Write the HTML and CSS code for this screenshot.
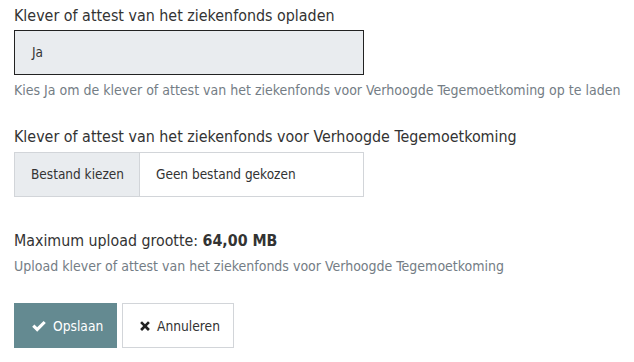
FILE: index.html
```html
<!DOCTYPE html>
<html>
<head>
<meta charset="utf-8">
<link rel="stylesheet" href="styles.css">
</head>
<body>
<form class="form">
  <div class="group">
    <label class="label">Klever of attest van het ziekenfonds opladen</label>
    <div class="select">Ja</div>
    <div class="help">Kies Ja om de klever of attest van het ziekenfonds voor Verhoogde Tegemoetkoming op te laden</div>
  </div>
  <div class="group group-file">
    <label class="label">Klever of attest van het ziekenfonds voor Verhoogde Tegemoetkoming</label>
    <div class="file">
      <span class="file-btn">Bestand kiezen</span>
      <span class="file-name">Geen bestand gekozen</span>
    </div>
  </div>
  <div class="group group-max">
    <div class="max">Maximum upload grootte: <strong>64,00 MB</strong></div>
    <div class="help help-tight">Upload klever of attest van het ziekenfonds voor Verhoogde Tegemoetkoming</div>
  </div>
  <div class="actions">
    <button type="button" class="btn btn-primary"><svg class="ico" viewBox="0 0 16 16" width="16" height="16"><path d="M1.2 8.7 L3.4 6.5 L6.2 9.3 L12.6 2.9 L14.8 5.1 L6.2 13.7 Z" fill="#fff"/></svg>Opslaan</button>
    <button type="button" class="btn btn-default"><svg class="ico" viewBox="0 0 16 16" width="12" height="12"><path d="M1.5 4 L4 1.5 L8 5.5 L12 1.5 L14.5 4 L10.5 8 L14.5 12 L12 14.5 L8 10.5 L4 14.5 L1.5 12 L5.5 8 Z" fill="#222"/></svg>Annuleren</button>
  </div>
</form>
</body>
</html>
```
FILE: styles.css
```css
html, body {
  margin: 0;
  padding: 0;
  background: #fff;
}
body {
  font-family: "DejaVu Sans Condensed", "Liberation Sans", sans-serif;
  color: #333;
}
.form {
  padding: 5px 0 0 14px;
}
.label {
  display: block;
  font-size: 15.9px;
  line-height: 22px;
  margin-bottom: 3px;
  color: #333;
}
.group-file .label {
  margin-top: 26px;
  margin-bottom: 4px;
}
.select {
  box-sizing: border-box;
  width: 350px;
  height: 45px;
  border: 1px solid #222;
  background: #e9ecef;
  padding: 0 17px;
  font-size: 13.5px;
  line-height: 43px;
  color: #333;
}
.help {
  font-size: 14px;
  line-height: 20px;
  color: #747d85;
  margin-top: 5px;
  white-space: nowrap;
}
.help-tight {
  margin-top: 4px;
}
.file {
  box-sizing: border-box;
  width: 350px;
  height: 45px;
  border: 1px solid #d2d5d9;
  display: flex;
  font-size: 13.5px;
  line-height: 43px;
  white-space: nowrap;
}
.file-btn {
  background: #e9ecef;
  border-right: 1px solid #d2d5d9;
  padding: 0 0 0 16px;
  width: 125px;
  box-sizing: border-box;
}
.file-name {
  padding-left: 16px;
}
.group-max {
  margin-top: 33px;
}
.max {
  font-size: 15.8px;
  line-height: 22px;
}
.max strong {
  font-weight: bold;
}
.actions {
  display: flex;
  gap: 5px;
  margin-top: 27px;
}
.btn {
  box-sizing: border-box;
  height: 45px;
  margin: 0;
  font-family: inherit;
  font-size: 13.7px;
  display: flex;
  align-items: center;
  gap: 6px;
  cursor: pointer;
}
.btn-primary {
  background: #648a91;
  border: 1px solid #648a91;
  color: #fff;
  width: 103px;
  padding: 0 0 0 16px;
}
.btn-default {
  background: #fff;
  border: 1px solid #d2d5d9;
  color: #333;
  width: 112px;
  padding: 0 0 0 16px;
}
.ico {
  flex: none;
}
```
